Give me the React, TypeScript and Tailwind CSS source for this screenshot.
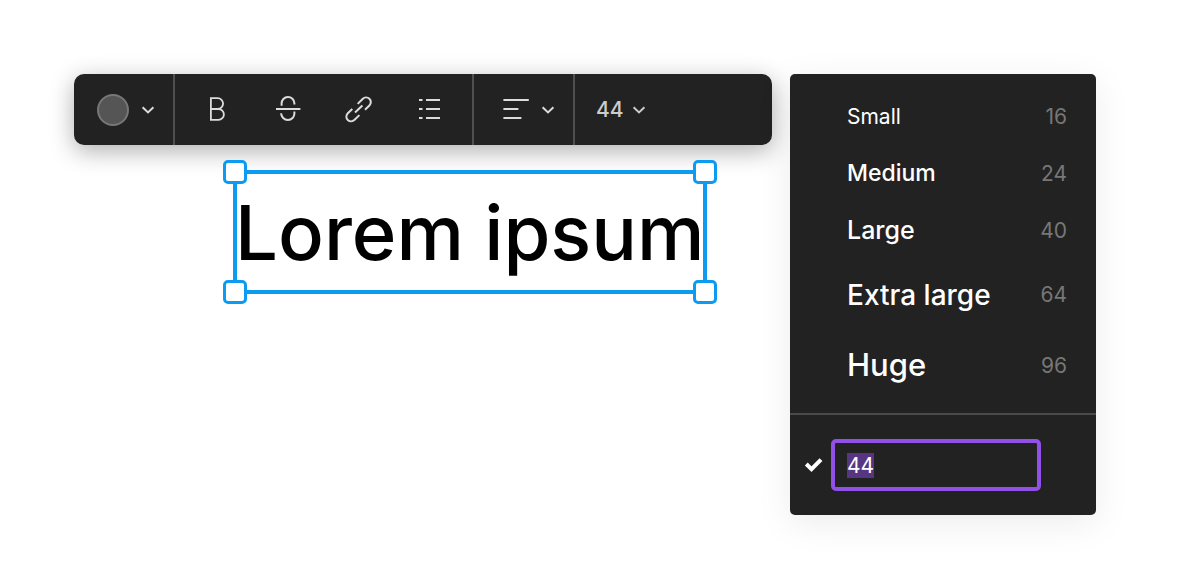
import { useEffect, useRef, useState } from "react";
import type { ReactNode } from "react";

const SIZES = [
  { label: "Small", value: 16, row: "h-[57px]", text: "text-[21px]" },
  { label: "Medium", value: 24, row: "h-[57px]", text: "text-[23px] font-medium" },
  { label: "Large", value: 40, row: "h-[57px]", text: "text-[25px] font-medium" },
  { label: "Extra large", value: 64, row: "h-[71px]", text: "text-[28px] font-medium" },
  { label: "Huge", value: 96, row: "h-[71px]", text: "text-[31px] font-medium" },
];

const HANDLES = [
  "-left-[14px] -top-[14px]",
  "-right-[14px] -top-[14px]",
  "-left-[14px] -bottom-[14px]",
  "-right-[14px] -bottom-[14px]",
];

function Chevron() {
  return (
    <svg width="14" height="11" viewBox="0 0 14 11" fill="none" stroke="currentColor" strokeWidth="2" aria-hidden="true">
      <path d="M1.6 3.2 7 8.4l5.4-5.2" />
    </svg>
  );
}

function Icon({ children }: { children: ReactNode }) {
  return (
    <svg width="31" height="31" viewBox="0 0 31 31" fill="none" stroke="currentColor" strokeWidth="2" aria-hidden="true">
      {children}
    </svg>
  );
}

function ToolButton({ label, children }: { label: string; children: ReactNode }) {
  return (
    <button type="button" aria-label={label} className="flex h-full w-[71px] items-center justify-center">
      {children}
    </button>
  );
}

function Toolbar({ size }: { size: string }) {
  return (
    <div
      role="toolbar"
      aria-label="Text formatting"
      className="flex h-[71px] rounded-[10px] bg-[#222] text-[#dcdcdc] shadow-[0_6px_24px_rgba(0,0,0,0.32)]"
    >
      <button
        type="button"
        aria-label="Text color"
        className="flex w-[101px] items-center gap-3 border-r-2 border-[#4f4f4f] pl-[23px]"
      >
        <span className="size-8 rounded-full border-2 border-[#777] bg-[#555]" />
        <Chevron />
      </button>
      <div className="flex border-r-2 border-[#4f4f4f] pl-[6px] pr-[7px]">
        <ToolButton label="Bold">
          <Icon>
            <path
              strokeWidth="1.8"
              d="M9.9 4.2h6.8a5.4 5.4 0 0 1 0 10.8H9.9m0 0h7.6a5.4 5.4 0 0 1 0 10.8H9.9zM9.9 3.3v23.4"
            />
          </Icon>
        </ToolButton>
        <ToolButton label="Strikethrough">
          <Icon>
            <path d="M4 15h24.4" />
            <path d="M9.6 11.8V9.6a6.4 6.4 0 0 1 12.8-.3v1.2M9.1 19.3a6.8 6.8 0 0 0 6.8 6.7c3.8 0 6.5-3 6.5-6.6v-1.8" />
          </Icon>
        </ToolButton>
        <ToolButton label="Link">
          <Icon>
            <path d="m12 18.4 7.4-7" />
            <path d="m14.7 9.9 4.9-4.9c2-2 4.9-2 6.8-.2s1.9 4.8 0 6.7L22 15.8M16.4 21.1l-4.8 4.7c-2 2-4.9 2-6.8.2s-1.9-4.8 0-6.7L9.3 15" />
          </Icon>
        </ToolButton>
        <ToolButton label="Bulleted list">
          <Icon>
            <path d="M5 6h3.5M12 6h14M5 15h3.5M12 15h14M5 24h3.5M12 24h14" />
          </Icon>
        </ToolButton>
      </div>
      <button
        type="button"
        aria-label="Text alignment"
        className="flex w-[101px] items-center gap-[9px] border-r-2 border-[#4f4f4f] pl-[27px]"
      >
        <Icon>
          <path d="M2.4 6h25.4M2.4 15h15M2.4 24h18" />
        </Icon>
        <Chevron />
      </button>
      <button
        type="button"
        aria-label="Font size"
        className="flex items-center gap-2 pl-[21px] text-[21px] font-medium text-[#ccc]"
      >
        {size}
        <Chevron />
      </button>
    </div>
  );
}

function SelectedText() {
  return (
    <div className="relative ml-[159px] mt-[25px] w-fit border-[4px] border-[#0d9bf2]">
      <p className="-mx-[2px] whitespace-nowrap text-[76px] font-medium leading-[116px] text-black">Lorem ipsum</p>
      {HANDLES.map((place) => (
        <span key={place} className={`absolute size-6 rounded-[5px] border-[3px] border-[#0d9bf2] bg-white ${place}`} />
      ))}
    </div>
  );
}

function SizeMenu({ size, onChange }: { size: string; onChange: (size: string) => void }) {
  const field = useRef<HTMLInputElement>(null);

  useEffect(() => {
    field.current?.focus();
    field.current?.select();
  }, []);

  return (
    <div className="w-[306px] shrink-0 rounded-[5px] bg-[#222] text-white shadow-[0_8px_36px_rgba(0,0,0,0.08)]">
      <ul className="border-b-2 border-[#4a4a4a] pb-3 pt-[14px]">
        {SIZES.map((item) => (
          <li key={item.label}>
            <button
              type="button"
              onClick={() => onChange(String(item.value))}
              className={`flex w-full items-center justify-between pl-[57px] pr-[29px] ${item.row}`}
            >
              <span className={item.text}>{item.label}</span>
              <span className="text-[21px] text-[#777]">{item.value}</span>
            </button>
          </li>
        ))}
      </ul>
      <div className="flex items-center py-6 pl-[14px]">
        <svg width="20" height="16" viewBox="0 0 20 16" fill="none" stroke="currentColor" strokeWidth="4" aria-hidden="true">
          <path d="m2.3 7 5.2 5.2L17 2.6" />
        </svg>
        <input
          ref={field}
          type="text"
          aria-label="Custom font size"
          value={size}
          onChange={(event) => onChange(event.target.value)}
          className="ml-[7px] h-[52px] w-[210px] rounded-[5px] border-[4px] border-[#9150e8] bg-transparent px-3 text-[21px] leading-7 caret-transparent outline-none selection:bg-[#573583] selection:text-white"
        />
      </div>
    </div>
  );
}

export default function App() {
  const [size, setSize] = useState("44");

  return (
    <main className="flex items-start gap-[18px] bg-white pb-[72px] pl-[74px] pr-[104px] pt-[74px] font-['Inter',sans-serif]">
      <div className="min-w-0 flex-1">
        <Toolbar size={size} />
        <SelectedText />
      </div>
      <SizeMenu size={size} onChange={setSize} />
    </main>
  );
}
